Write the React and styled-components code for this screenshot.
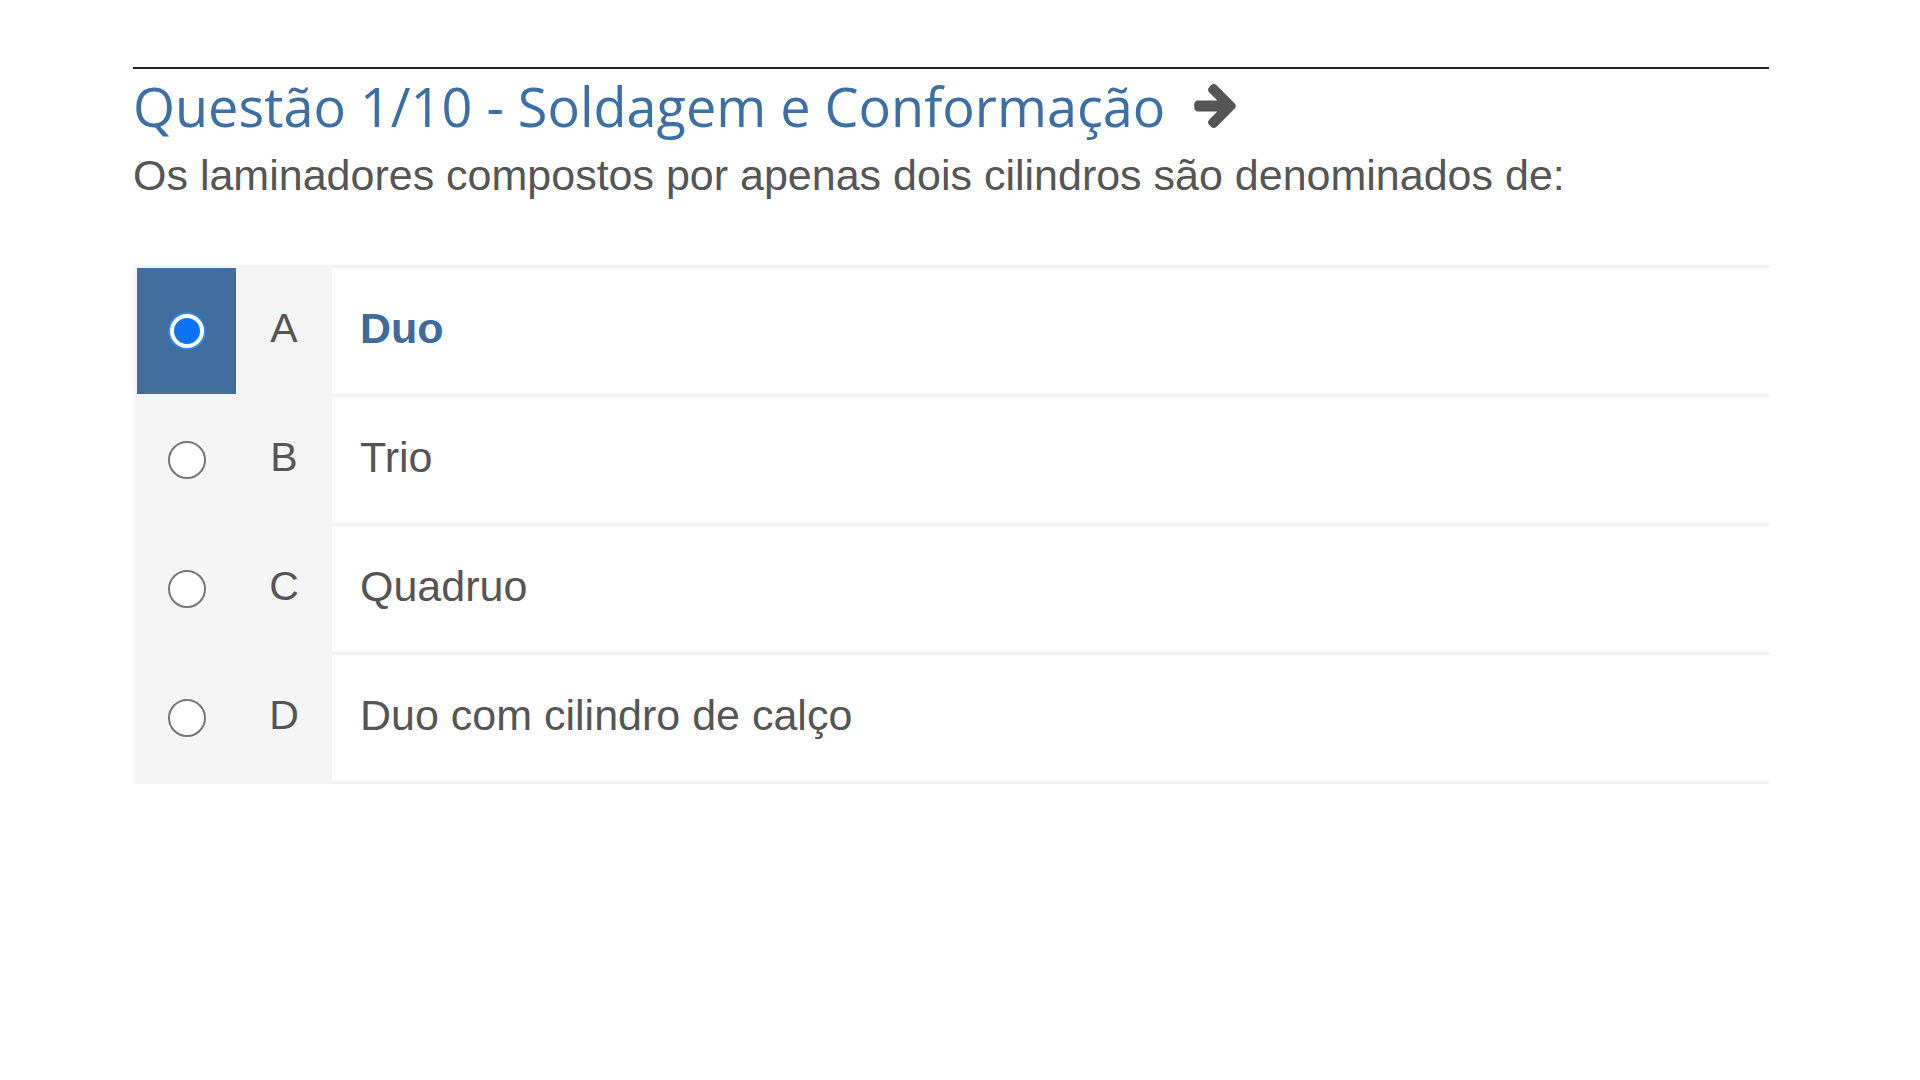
import React from 'react';
import styled, { createGlobalStyle } from 'styled-components';

const questao = {
  titulo: 'Questão 1/10 - Soldagem e Conformação',
  enunciado: 'Os laminadores compostos por apenas dois cilindros são denominados de:',
  selecionada: 'A',
  alternativas: [
    { letra: 'A', texto: 'Duo' },
    { letra: 'B', texto: 'Trio' },
    { letra: 'C', texto: 'Quadruo' },
    { letra: 'D', texto: 'Duo com cilindro de calço' },
  ],
};

const ArrowIcon = () => (
  <ArrowSvg viewBox="128 181 1472 1558" aria-hidden="true">
    <path d="M1600 960q0 54-37 91l-651 651q-39 37-91 37-51 0-90-37l-75-75q-38-38-38-91t38-91l293-293h-704q-52 0-84.5-37.5t-32.5-90.5v-128q0-53 32.5-90.5t84.5-37.5h704l-293-294q-38-36-38-90t38-90l75-75q38-38 90-38 53 0 91 38l651 651q37 35 37 90z" />
  </ArrowSvg>
);

const App = () => {
  const { titulo, enunciado, alternativas, selecionada } = questao;

  return (
    <>
      <GlobalStyle />
      <Container>
        <Title>
          {titulo}
          <ArrowIcon />
        </Title>
        <Enunciado>{enunciado}</Enunciado>
        <Lista>
          {alternativas.map((alt, i) => {
            const ativa = alt.letra === selecionada;
            return (
              <Item key={alt.letra}>
                <Lateral $first={i === 0}>
                  <RadioCell $ativa={ativa}>
                    <Radio $ativa={ativa} />
                  </RadioCell>
                  <Letra>{alt.letra}</Letra>
                </Lateral>
                <Texto $first={i === 0} $ativa={ativa}>{alt.texto}</Texto>
              </Item>
            );
          })}
        </Lista>
      </Container>
    </>
  );
};

export default App;

// Styled Components
const GlobalStyle = createGlobalStyle`
  body {
    margin: 0;
    background: #fff;
    font-family: "Liberation Sans", Arial, sans-serif;
  }
`;

const Container = styled.div`
  width: 1636px;
  margin-left: 133px;
  padding-top: 67px;
`;

const Title = styled.h1`
  margin: 0;
  padding-top: 5px;
  border-top: 2px solid #222;
  font-family: "Open Sans", sans-serif;
  font-weight: 400;
  font-size: 54px;
  line-height: 64px;
  color: #3b6fa6;
  display: flex;
  align-items: center;
`;

const ArrowSvg = styled.svg`
  margin-left: 29px;
  width: 42px;
  height: 44px;
  fill: #555;
`;

const Enunciado = styled.p`
  margin: 12px 0 0;
  font-size: 43px;
  line-height: 50px;
  color: #555;
`;

const Lista = styled.div`
  margin-top: 65px;
`;

const Item = styled.div`
  display: grid;
  grid-template-columns: 199px 1fr;
`;

const Lateral = styled.div`
  display: flex;
  background: #f5f5f5;
  padding: ${({ $first }) => ($first ? '3px' : '0')} 0 3px 4px;
`;

const RadioCell = styled.div`
  width: 99px;
  height: 126px;
  display: flex;
  align-items: center;
  justify-content: center;
  background: ${({ $ativa }) => ($ativa ? '#406d9c' : 'transparent')};
`;

const Radio = styled.span`
  box-sizing: border-box;
  width: 38px;
  height: 38px;
  border-radius: 50%;
  ${({ $ativa }) =>
    $ativa
      ? `
    width: 34px;
    height: 34px;
    background: #0a74f5;
    border: 4px solid #fff;
    box-shadow: 0 0 0 2px #2b86f0;
  `
      : `
    background: #fff;
    border: 2px solid #767676;
  `}
`;

const Letra = styled.div`
  flex: 1;
  display: flex;
  align-items: center;
  justify-content: center;
  padding-bottom: 5px;
  font-size: 41px;
  color: #555;
`;

const Texto = styled.div`
  display: flex;
  align-items: center;
  padding-left: 28px;
  padding-bottom: 6px;
  border-top: ${({ $first }) => ($first ? '3px solid #f2f2f2' : 'none')};
  border-bottom: 3px solid #f2f2f2;
  font-size: 43px;
  font-weight: ${({ $ativa }) => ($ativa ? 700 : 400)};
  color: ${({ $ativa }) => ($ativa ? '#3d6b9b' : '#555')};
`;
